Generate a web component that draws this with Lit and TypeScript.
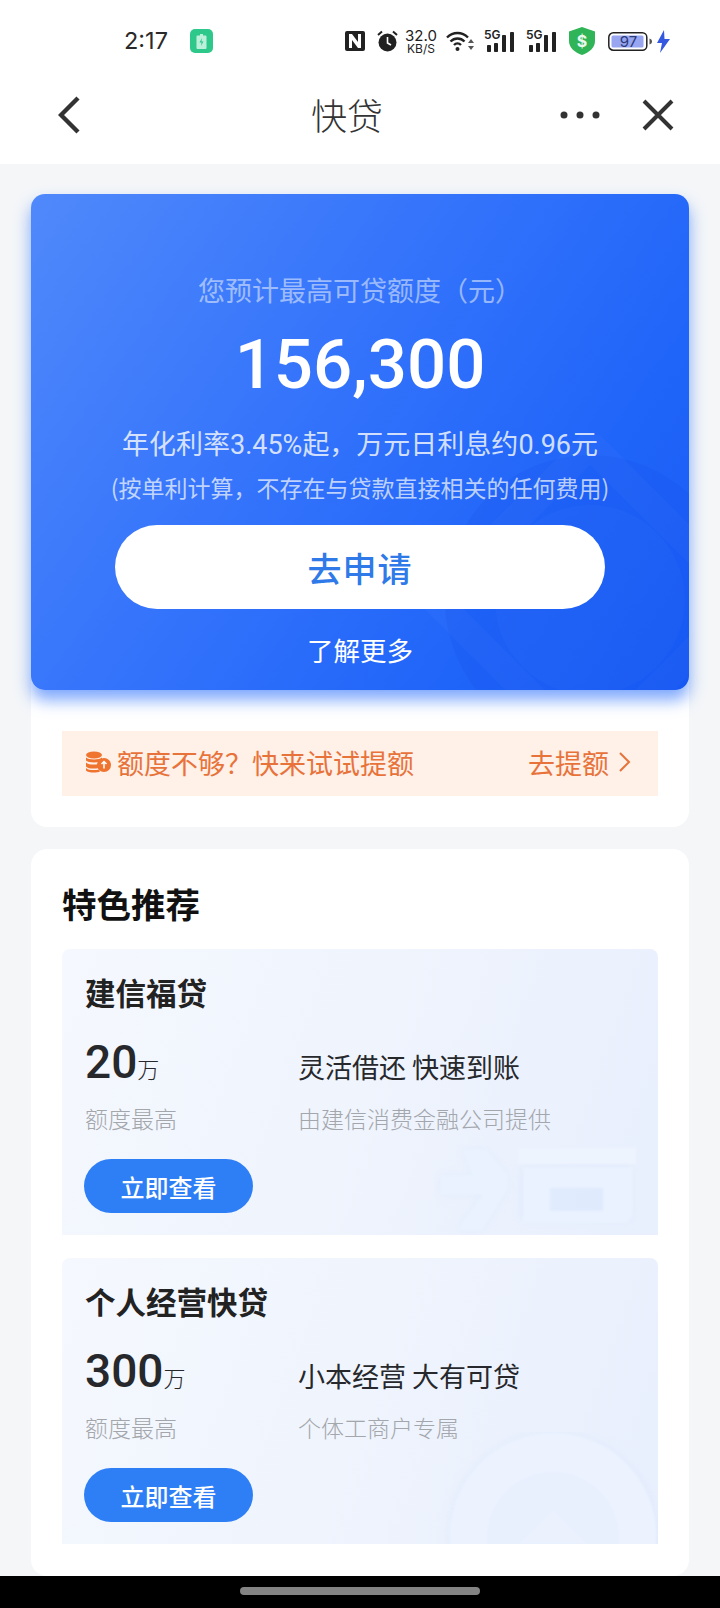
import { LitElement, html, css, svg } from "lit";
import { customElement } from "lit/decorators.js";

const signal = svg`<text x="0" y="10" font-family="Inter, Roboto, sans-serif" font-size="12" font-weight="600" fill="#222">5G</text><g fill="#222"><rect x="3" y="16" width="4" height="7" rx=".8"/><rect x="10" y="14" width="4" height="9" rx=".8"/><rect x="18" y="6" width="4" height="17" rx=".8"/><rect x="26" y="3" width="4" height="20" rx=".8"/></g>`;

@customElement("app-root")
export class AppRoot extends LitElement {
  static styles = css`
    :host { display: block; width: 720px; height: 1608px; overflow: hidden; background: #f4f6f8; font-family: "Noto Sans CJK SC", "Noto Sans", sans-serif; color: #222; }
    .page { display: flex; flex-direction: column; height: 1608px; }
    svg { display: block; flex: none; }
    .status { height: 72px; flex: none; background: #fff; display: flex; align-items: center; padding: 10px 50px 0 124px; box-sizing: border-box; }
    .time { font: 400 23.500px/1 Inter, Roboto, sans-serif; color: #2a2a2a; width: 66px; }
    .badge { width: 23px; height: 24px; border-radius: 5px; background: #2fc88b; display: flex; align-items: center; justify-content: center; }
    .icons { margin-left: auto; display: flex; align-items: center; }
    .speed { font-family: Inter, Roboto, sans-serif; color: #222; text-align: center; width: 34px; margin: 0 8px 0 6px; }
    .speed b { display: block; font: 400 15px/15px Inter, sans-serif; }
    .speed i { display: block; font: 400 12px/12px Inter, sans-serif; }
    .m-wifi { margin-right: 9px; }
    .m-5g { margin-right: 12px; margin-top: -8px; }
    .m-5g2 { margin-right: 13px; margin-top: -8px; }
    .m-shield { margin-right: 13px; }
    .m-alarm { margin: 0 0 0 12px; }
    .batt { position: relative; width: 44px; height: 19px; margin-right: 5px; }
    .batt span { position: absolute; left: 5px; top: 2px; width: 31px; font: 400 15px/15px Inter, Roboto, sans-serif; color: #2a3a7a; text-align: center; }
    .nav { height: 92px; flex: none; background: #fff; display: flex; align-items: center; padding: 0 46px 6px 58px; box-sizing: border-box; position: relative; }
    .nav h1 { flex: 1; margin: -2px 0 0; text-align: center; font-size: 36px; line-height: 48px; font-weight: 300; color: #333; padding-left: 54px; }
    .nav .dots { margin-right: 42px; }
    main { flex: 1; min-height: 0; padding: 30px 31px 0; display: flex; flex-direction: column; gap: 22px; }
    .top { background: #fff; border-radius: 16px; }
    .hero { position: relative; overflow: hidden; height: 496px; border-radius: 14px; background: linear-gradient(125deg, #5089fb 0%, #3272fb 45%, #2065f9 75%, #185bf6 100%); display: flex; flex-direction: column; align-items: center; color: #fff; }
    .heroWrap { border-radius: 14px; box-shadow: 0 10px 16px rgba(40, 110, 250, 0.6); }
    .hero .mark { position: absolute; right: -66px; bottom: -75px; }
    .hero > div { position: relative; }
    .l1 { margin-top: 76px; font-size: 27px; line-height: 40px; color: rgba(255,255,255,.5); font-weight: 400; }
    .amount { margin-top: 15px; font: 500 69px/80px Roboto, sans-serif; }
    .l3 { margin-top: 18px; font-size: 27px; line-height: 40px; color: rgba(255,255,255,.8); font-weight: 400; white-space: nowrap; }
    .l3 span, .l4 span { font-family: Roboto, sans-serif; }
    .l4 { margin-top: 2px; font-size: 23px; line-height: 40px; color: rgba(255,255,255,.7); font-weight: 400; white-space: nowrap; }
    .apply { margin-top: 18px; width: 490px; height: 84px; border-radius: 42px; background: #fff; color: #2f7ae8; font-size: 34px; font-weight: 500; display: flex; align-items: center; justify-content: center; letter-spacing: 1px; }
    .more { margin-top: 21px; font-size: 26.500px; line-height: 40px; font-weight: 400; }
    .tip { margin: 41px 31px 31px; height: 65px; background: #fff0e8; display: flex; align-items: center; color: #e8733a; font-size: 27px; font-weight: 400; padding: 0 27px 3px 23px; box-sizing: border-box; }
    .tip .txt { margin-left: 6px; flex: 1; }
    .tip .go { margin-right: 9px; }
    .rec { background: #fff; border-radius: 16px; padding: 28px 31px 31px; flex: 1; }
    .rec h2 { margin: 0 0 20px; font-size: 34.500px; line-height: 52px; font-weight: 700; color: #111; }
    .panel { position: relative; overflow: hidden; height: 286px; box-sizing: border-box; border-radius: 8px 8px 0 0; padding: 21px 23px 0; background: linear-gradient(110deg, #f5f8fe 0%, #eff4fd 50%, #e8effd 100%); }
    .panel + .panel { margin-top: 23px; }
    .panel .wm { position: absolute; bottom: 0; }
    .panel .wm.a { right: 20px; }
    .panel .wm.b { right: 0; }
    .panel h3 { position: relative; margin: 0; font-size: 30.500px; line-height: 44px; font-weight: 600; color: #222; }
    .grid { position: relative; display: grid; grid-template-columns: 213px 1fr; align-items: baseline; margin-top: 19px; }
    .num { font: 500 46px/58px Roboto, sans-serif; color: #26282c; }
    .num small { font: 300 22px/1 "Noto Sans CJK SC", sans-serif; }
    .slogan { font-size: 27px; line-height: 40px; font-weight: 400; color: #26282c; white-space: pre; }
    .cap { margin-top: 10px; font-size: 23px; line-height: 34px; font-weight: 300; color: #a3a6ab; }
    .btn { position: relative; margin: 24px 0 0 -1px; width: 169px; height: 54px; border-radius: 27px; background: #2e7ff6; color: #fff; font-size: 24px; font-weight: 500; display: flex; align-items: center; justify-content: center; }
    .home { height: 32px; flex: none; background: #000; display: flex; align-items: center; justify-content: center; padding-bottom: 2px; box-sizing: border-box; }
    .home i { display: block; width: 240px; height: 8px; border-radius: 4px; background: #848484; }
  `;

  private product(name: string, num: string, slogan: string, sub: string, wm: unknown) {
    return html`<section class="panel">
      ${wm}
      <h3>${name}</h3>
      <div class="grid">
        <div class="num">${num}<small>万</small></div>
        <div class="slogan">${slogan}</div>
        <div class="cap">额度最高</div>
        <div class="cap">${sub}</div>
      </div>
      <div class="btn">立即查看</div>
    </section>`;
  }

  render() {
    const wm1 = html`<svg class="wm a" width="204" height="90" viewBox="-2 0 204 90">
      <defs>
        <filter id="b1" x="-10%" y="-20%" width="120%" height="140%"><feGaussianBlur stdDeviation="5"/></filter>
        <filter id="b1s" x="-5%" y="-5%" width="110%" height="110%"><feGaussianBlur stdDeviation=".8"/></filter>
      </defs>
      <g filter="url(#b1)" fill="#d8e6fd" opacity=".5">
        <path d="M20 86 L46 50 H4 V30 H36 L26 4 H50 L72 30 V44 L46 86 Z"/>
        <rect x="84" y="20" width="112" height="56"/>
      </g>
      <g filter="url(#b1s)">
        <path d="M20 86 L46 50 H4 V30 H36 L26 4 H50 L72 30 V44 L46 86 Z" fill="#e9f2fe"/>
        <rect x="82" y="3" width="118" height="16" fill="#eef4fe"/>
        <path d="M87 22 H197 V72 L190 78 H87 Z M114 43 V66 H167 V43 Z" fill-rule="evenodd" fill="#e9f2fe"/>
      </g></svg>`;
    const wm2 = html`<svg class="wm b" width="220" height="112" viewBox="0 0 220 112">
      <defs><filter id="b2" x="-10%" y="-10%" width="120%" height="120%"><feGaussianBlur stdDeviation="4"/></filter>
      <filter id="b3"><feGaussianBlur stdDeviation="1"/></filter></defs>
      <circle cx="115" cy="104" r="106" fill="#dde7fb" opacity=".5" filter="url(#b2)"/>
      <g filter="url(#b3)">
        <circle cx="115" cy="104" r="103" fill="#ecf3ff"/>
        <circle cx="115" cy="106" r="66" fill="#e8effd"/>
        <path d="M80 112 L115 78 L150 112 Z" fill="#ebf2fe"/>
      </g></svg>`;
    return html`<div class="page">
      <header class="status">
        <span class="time">2:17</span>
        <span class="badge"><svg width="11" height="15" viewBox="0 0 11 15"><path d="M4 0h3v1.500h2.500a1 1 0 0 1 1 1V14a1 1 0 0 1-1 1h-8a1 1 0 0 1-1-1V2.500a1 1 0 0 1 1-1H4z" fill="#bdf0da"/><path d="M6 4 3.500 8.500h2L5 12l2.500-4.500h-2z" fill="#2fc88b"/></svg></span>
        <div class="icons">
          <svg width="20" height="20" viewBox="0 0 20 20"><rect width="20" height="20" rx="2" fill="#222"/><path d="M4 3h3l6 8V3h3v14h-3L7 9v8H4z" fill="#fff"/></svg>
          <svg class="m-alarm" width="21" height="22" viewBox="0 0 21 22"><circle cx="10.500" cy="12.500" r="9" fill="#222"/><path d="M10.500 7v6l3.500 2" stroke="#fff" stroke-width="1.600" fill="none"/><path d="M1 5 5 1.500M20 5 16 1.500" stroke="#222" stroke-width="2"/></svg>
          <div class="speed"><b>32.0</b><i>KB/S</i></div>
          <svg class="m-wifi" width="29" height="22" viewBox="0 0 29 22"><path d="M1 7.500C7 1.500 16 1.500 22 7.500M4.500 11.500c4-4 10-4 14 0M8 15c2-2 5-2 7 0" stroke="#222" stroke-width="2.400" fill="none"/><circle cx="11.500" cy="19" r="2" fill="#222"/><path d="m25 9 3 4h-6zM25 20l3-4h-6z" fill="#555"/></svg>
          <svg class="m-5g" width="30" height="32" viewBox="0 -8 30 32">${signal}</svg>
          <svg class="m-5g2" width="30" height="32" viewBox="0 -8 30 32">${signal}</svg>
          <svg class="m-shield" width="26" height="28" viewBox="0 0 26 28"><path d="M13 0 26 4.500V14c0 7-6 11.500-13 14C6 25.500 0 21 0 14V4.500z" fill="#2fb457"/><text x="13" y="19.500" text-anchor="middle" font-family="Inter, Roboto, sans-serif" font-size="16" font-weight="700" fill="#e8f8ee">$</text></svg>
          <div class="batt">
            <svg width="44" height="19" viewBox="0 0 44 19"><rect x=".8" y=".8" width="38" height="17.400" rx="4.500" fill="#fff" stroke="#222" stroke-width="1.500"/><rect x="3.500" y="3.500" width="32" height="12" rx="1.500" fill="#98a5f0"/><path d="M41.500 6.500c1.500.4 2.500 1.400 2.500 3s-1 2.600-2.500 3z" fill="#555"/></svg>
            <span>97</span>
          </div>
          <svg width="13" height="23" viewBox="0 0 13 23"><path d="M7 0 0 13h5l-2 10 10-14H7.500z" fill="#3458e0"/></svg>
        </div>
      </header>
      <nav class="nav">
        <svg width="22" height="38" viewBox="0 0 22 38"><path d="M20 2 3 19l17 17" stroke="#333" stroke-width="4.400" fill="none"/></svg>
        <h1>快贷</h1>
        <svg class="dots" width="40" height="8" viewBox="0 0 40 8"><circle cx="4" cy="4" r="3.500" fill="#333"/><circle cx="20" cy="4" r="3.500" fill="#333"/><circle cx="36" cy="4" r="3.500" fill="#333"/></svg>
        <svg width="32" height="32" viewBox="0 0 32 32"><path d="M2 2l28 28M30 2 2 30" stroke="#333" stroke-width="4" fill="none"/></svg>
      </nav>
      <main>
        <section class="top">
          <div class="heroWrap">
            <div class="hero">
              <svg class="mark" width="330" height="330" viewBox="0 0 330 330">
                <circle cx="165" cy="165" r="145" fill="#1148e8" opacity=".16"/>
                <circle cx="165" cy="165" r="95" fill="#fff" opacity=".02"/>
                <path d="M165 10 320 165 165 320 10 165z" fill="none" stroke="#fff" stroke-width="28" opacity=".025"/>
              </svg>
              <div class="l1">您预计最高可贷额度（元）</div>
              <div class="amount">156,300</div>
              <div class="l3">年化利率<span>3.45%</span>起，万元日利息约<span>0.96</span>元</div>
              <div class="l4">(按单利计算，不存在与贷款直接相关的任何费用)</div>
              <div class="apply">去申请</div>
              <div class="more">了解更多</div>
            </div>
          </div>
          <div class="tip">
            <svg width="26" height="22" viewBox="0 0 26 22"><g fill="#ee7430"><ellipse cx="9" cy="4" rx="8" ry="3.500"/><path d="M1 6.500c2 2.500 14 2.500 16 0v3c-2 2.500-14 2.500-16 0zM1 11.500c2 2.500 10 2.500 12 1.500v4c-2 1-10 1-12-1.500zM1 17c2 2.500 10 2.500 13 1.500l1 2c-3 1.500-12 1.500-14-1z"/><circle cx="19" cy="14" r="7"/></g><path d="M19 10.500v7M16.500 13l2.500-2.500 2.500 2.500" stroke="#fff" stroke-width="1.500" fill="none"/></svg>
            <span class="txt">额度不够？快来试试提额</span>
            <span class="go">去提额</span>
            <svg width="13" height="22" viewBox="0 0 13 22"><path d="M2 2l9 9-9 9" stroke="#e8733a" stroke-width="2" fill="none"/></svg>
          </div>
        </section>
        <section class="rec">
          <h2>特色推荐</h2>
          ${this.product("建信福贷", "20", "灵活借还 快速到账", "由建信消费金融公司提供", wm1)}
          ${this.product("个人经营快贷", "300", "小本经营 大有可贷", "个体工商户专属", wm2)}
        </section>
      </main>
      <div class="home"><i></i></div>
    </div>`;
  }
}
